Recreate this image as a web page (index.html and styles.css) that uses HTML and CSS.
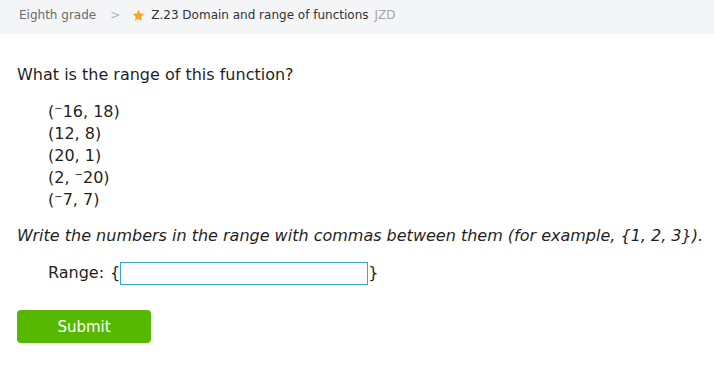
FILE: index.html
```html
<!DOCTYPE html>
<html lang="en">
<head>
  <meta charset="UTF-8">
  <meta name="viewport" content="width=device-width, initial-scale=1" />
  <title>Z.23 Domain and range of functions</title>
  <link rel="stylesheet" href="styles.css">
</head>
<body>
  <div class="breadcrumb">
    <span class="crumb-grade">Eighth grade</span>
    <span class="crumb-sep">&gt;</span>
    <svg class="crumb-star" width="13" height="13" viewBox="0 0 24 24">
      <path d="M12 1.5l3.2 6.9 7.5.9-5.5 5.2 1.4 7.4L12 18.2l-6.6 3.7 1.4-7.4-5.5-5.2 7.5-.9z" fill="#f5a623"/>
    </svg>
    <span class="crumb-skill">Z.23 Domain and range of functions</span>
    <span class="crumb-code">JZD</span>
  </div>

  <div class="question">
    <p class="prompt">What is the range of this function?</p>

    <ul class="points">
      <li>(<sup>&minus;</sup>16, 18)</li>
      <li>(12, 8)</li>
      <li>(20, 1)</li>
      <li>(2, <sup>&minus;</sup>20)</li>
      <li>(<sup>&minus;</sup>7, 7)</li>
    </ul>

    <p class="hint">Write the numbers in the range with commas between them (for example, {1, 2, 3}).</p>

    <div class="answer-row">
      <label for="range">Range:</label>
      <span class="brace">{</span>
      <input type="text" id="range">
      <span class="brace">}</span>
    </div>

    <button class="submit">Submit</button>
  </div>
</body>
</html>
```

FILE: styles.css
```css
body {
  margin: 0;
  font-family: "DejaVu Sans", Verdana, sans-serif;
  color: #1f1f1f;
  background-color: #ffffff;
}

.breadcrumb {
  display: flex;
  align-items: center;
  height: 30px;
  padding: 0 0 4px 19px;
  background-color: #f3f5f7;
  font-size: 12px;
}

.crumb-grade {
  color: #6b6b6b;
}

.crumb-sep {
  color: #b5b5b5;
  margin: 0 12px 0 14px;
}

.crumb-star {
  margin-right: 6px;
}

.crumb-skill {
  color: #333333;
}

.crumb-code {
  color: #a6a6a6;
  margin-left: 6px;
}

.question {
  padding: 0 0 0 17px;
  font-size: 16px;
  line-height: 22px;
}

.prompt {
  margin: 30px 0 15px;
}

.points {
  list-style: none;
  margin: 0;
  padding-left: 31px;
}

.points sup {
  font-size: 10px;
  vertical-align: 5px;
  line-height: 0;
}

.hint {
  margin: 14px 0 14px;
  font-style: italic;
  white-space: nowrap;
}

.answer-row {
  display: flex;
  align-items: center;
  height: 24px;
  padding-left: 31px;
}

.answer-row label {
  margin-right: 6px;
}

.answer-row input {
  width: 246px;
  height: 21px;
  padding: 0;
  margin: 0;
  border: 1px solid #3aa3d4;
  font: inherit;
}

.submit {
  margin-top: 25px;
  width: 134px;
  height: 33px;
  border: none;
  border-radius: 4px;
  background-color: #56b800;
  color: #ffffff;
  font-family: "DejaVu Sans", Verdana, sans-serif;
  font-size: 15px;
  cursor: pointer;
}
```
